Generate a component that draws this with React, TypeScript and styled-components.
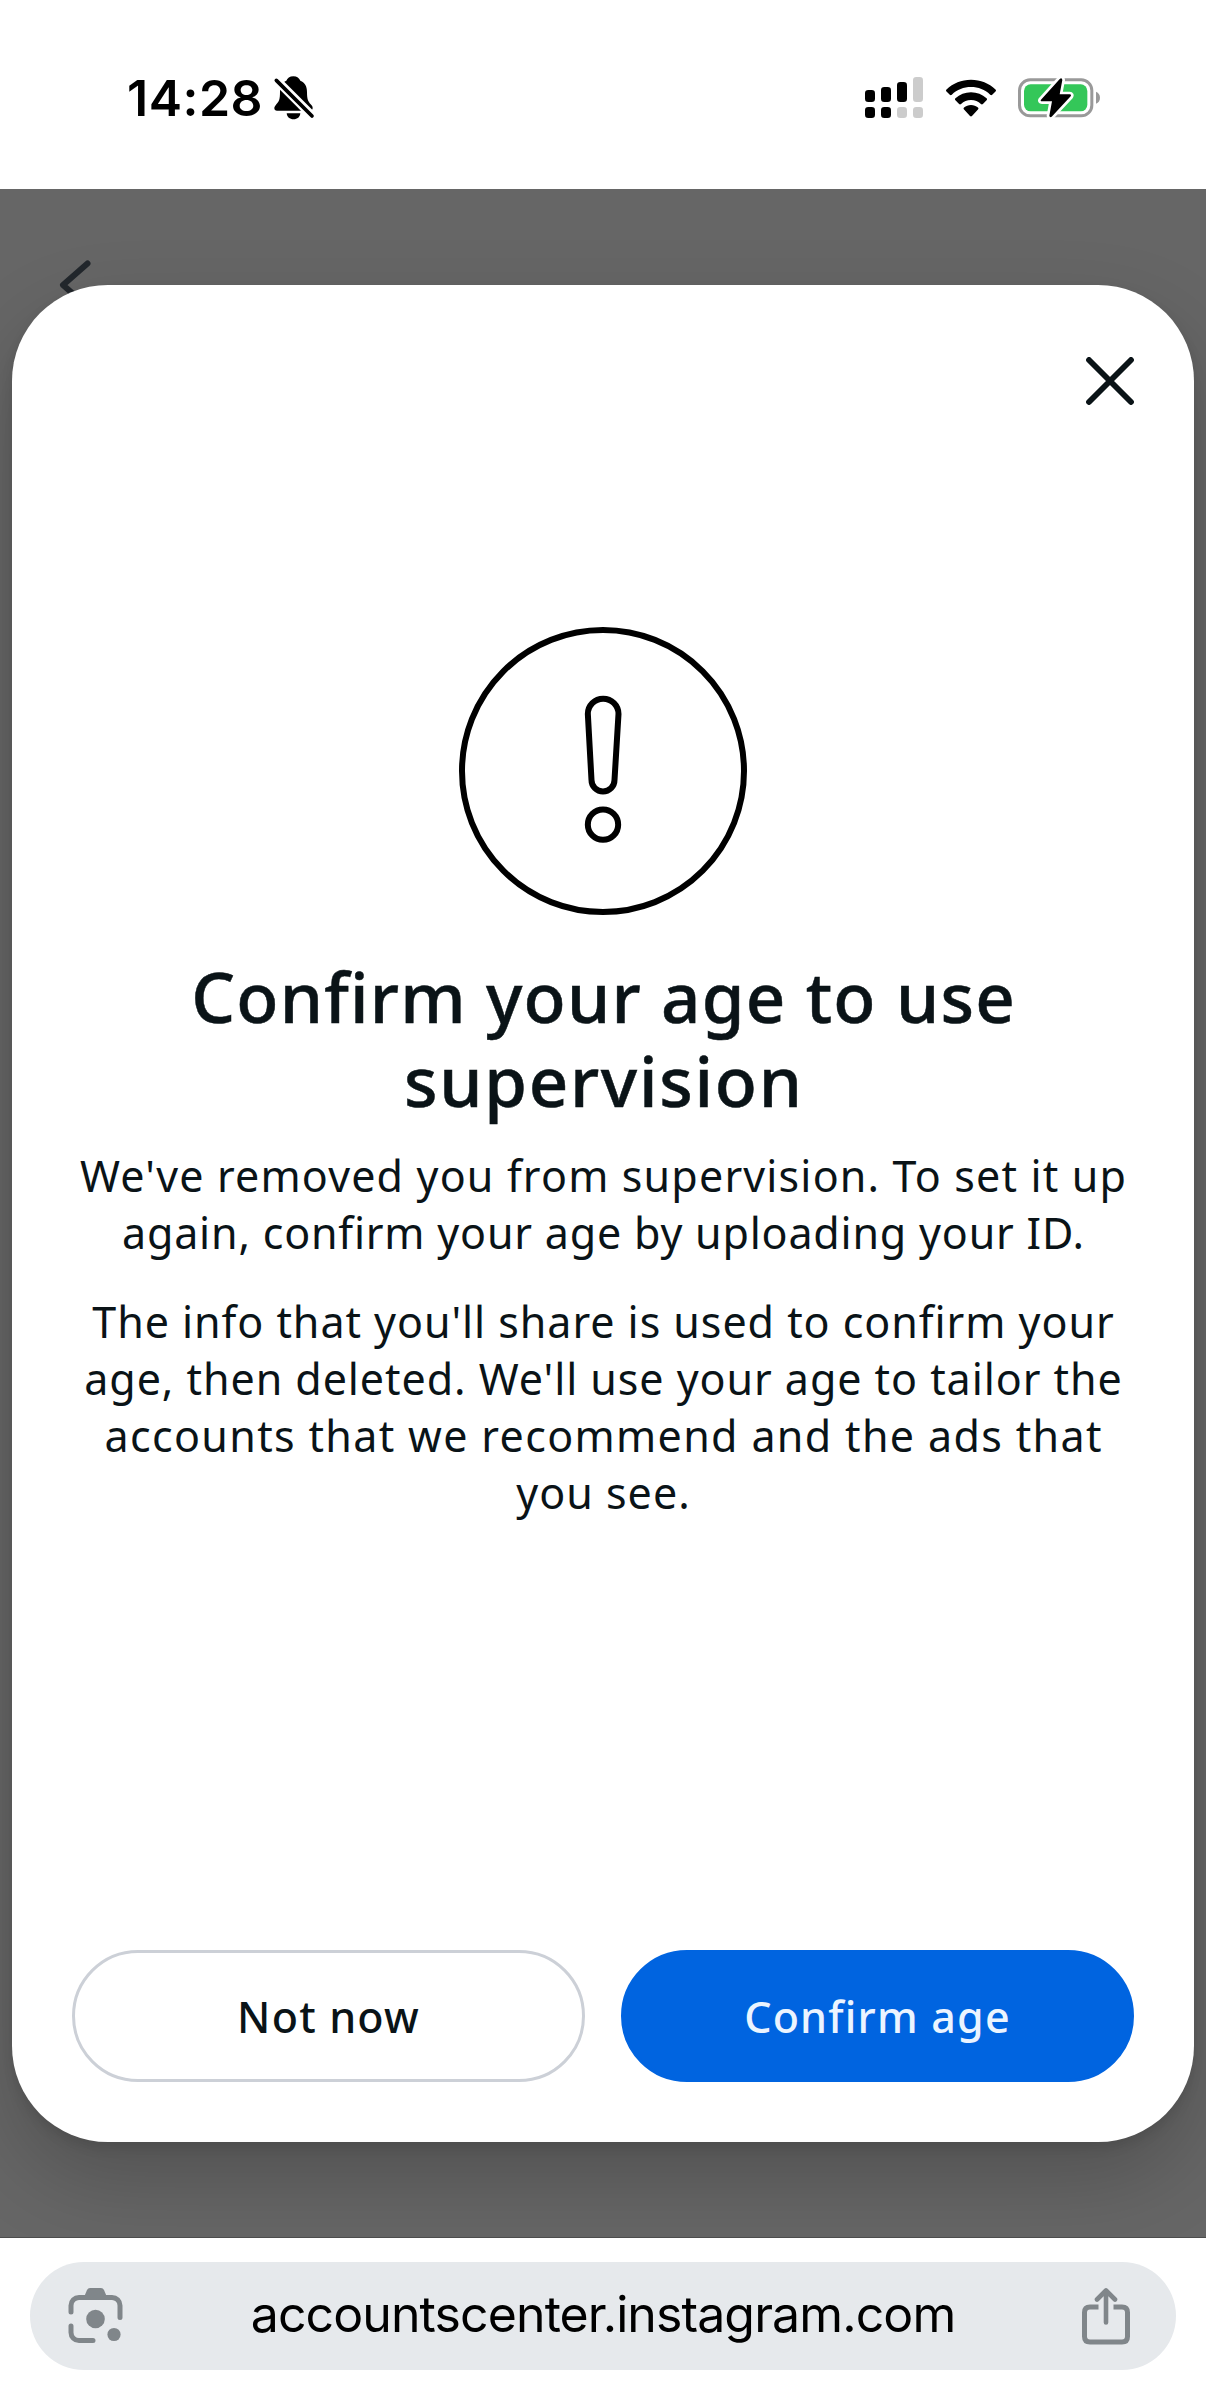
import React from 'react';
import styled, { createGlobalStyle } from 'styled-components';

const GlobalStyle = createGlobalStyle`
  *, *::before, *::after { box-sizing: border-box; }
  body { margin: 0; background: #fff; }
  svg { display: block; flex: none; }
  h1, p { margin: 0; }
`;

const sans = `'Noto Sans', 'Open Sans', sans-serif`;
const system = `Inter, 'Liberation Sans', sans-serif`;

const Screen = styled.div`
  display: flex;
  flex-direction: column;
  width: 1206px;
  height: 2395px;
  overflow: hidden;
  background: #fff;
`;

const StatusBar = styled.header`
  display: flex;
  align-items: center;
  justify-content: space-between;
  flex: none;
  height: 189px;
  padding: 6px 106px 0 127px;
`;

const StatusGroup = styled.div<{ $gap: number }>`
  display: flex;
  align-items: center;
  gap: ${({ $gap }) => $gap}px;
`;

const Time = styled.span`
  font: 600 50px/60px ${system};
  letter-spacing: 0.5px;
  color: #000;
`;

const Backdrop = styled.main`
  position: relative;
  flex: none;
  height: 2049px;
  padding: 96px 12px;
  overflow: hidden;
  background: #666;
  border-bottom: 1px solid #4c4c4c;
`;

const BackArrow = styled.svg`
  position: absolute;
  left: 56px;
  top: 66px;
`;

const Dialog = styled.section`
  position: relative;
  display: flex;
  flex-direction: column;
  height: 1857px;
  padding: 60px;
  border-radius: 96px;
  background: #fff;
  box-shadow: 0 36px 84px rgba(0, 0, 0, 0.2), 0 6px 12px rgba(0, 0, 0, 0.1);
`;

const CloseButton = styled.button`
  align-self: flex-end;
  display: flex;
  align-items: center;
  justify-content: center;
  width: 72px;
  height: 72px;
  margin-right: -12px;
  padding: 0;
  border: 0;
  background: none;
`;

const Content = styled.div`
  display: flex;
  flex-direction: column;
  align-items: center;
  flex: 1;
  padding-top: 210px;
  text-align: center;
  color: #0a1317;
`;

const Title = styled.h1`
  margin-top: 39px;
  font: 500 69px/84px ${sans};
  -webkit-text-stroke: 0.5px #0a1317;
`;

const Paragraph = styled.p<{ $top: number }>`
  margin-top: ${({ $top }) => $top}px;
  font: 400 43px/57px ${sans};
`;

const Line = styled.span<{ $tracking: number }>`
  display: block;
  white-space: nowrap;
  letter-spacing: ${({ $tracking }) => $tracking}px;
  margin-right: ${({ $tracking }) => -$tracking}px;
`;

const Actions = styled.footer`
  display: grid;
  grid-template-columns: 1fr 1fr;
  gap: 36px;
`;

const Action = styled.button<{ $primary?: boolean }>`
  height: 132px;
  padding: 0;
  border: 3px solid ${({ $primary }) => ($primary ? '#0064e0' : '#ccd0d7')};
  border-radius: 66px;
  background: ${({ $primary }) => ($primary ? '#0064e0' : '#fff')};
  color: ${({ $primary }) => ($primary ? '#ebf4ff' : '#0a1317')};
  font: 500 43px/57px ${sans};
  letter-spacing: 1.2px;
`;

const BrowserBar = styled.nav`
  flex: 1;
  padding: 24px 30px 0;
`;

const AddressPill = styled.div`
  display: flex;
  align-items: center;
  justify-content: space-between;
  height: 108px;
  padding: 0 46px 0 38px;
  border-radius: 54px;
  background: #e6e9ec;
`;

const Address = styled.span`
  padding-bottom: 4px;
  font: 400 50px/60px ${system};
  letter-spacing: -0.9px;
  color: #000;
`;

type Row = { text: string; tracking: number };

const title: Row[] = [
  { text: 'Confirm your age to use', tracking: 1.22 },
  { text: 'supervision', tracking: 1.7 },
];

const removed: Row[] = [
  { text: "We've removed you from supervision. To set it up", tracking: 1.17 },
  { text: 'again, confirm your age by uploading your ID.', tracking: 0.8 },
];

const usage: Row[] = [
  { text: "The info that you'll share is used to confirm your", tracking: 0.95 },
  { text: "age, then deleted. We'll use your age to tailor the", tracking: 0.94 },
  { text: 'accounts that we recommend and the ads that', tracking: 1.34 },
  { text: 'you see.', tracking: 1 },
];

const Lines = ({ rows }: { rows: Row[] }) => (
  <>
    {rows.map(({ text, tracking }) => (
      <Line key={text} $tracking={tracking}>{text}</Line>
    ))}
  </>
);

const BellSlot = styled.span`
  padding-bottom: 2px;
`;

const MutedBell = () => (
  <svg width="44" height="48" viewBox="487 40 132 144">
    <path d="M551 50c-11 0-18 6-21 13-13 6-19 18-19 34 0 22-3 29-11 37-4 5-6 8-6 12 0 5 3 7 8 7h98c6 0 9-3 9-8 0-4-2-7-6-11-8-9-11-16-11-37 0-17-6-28-20-34-3-7-10-13-21-13z" />
    <path d="M531 161h41c-1 11-9 18-20.500 18s-19.500-7-20.500-18z" />
    <path d="M492 53L618 179" stroke="#fff" strokeWidth="26" />
    <path d="M500 62L607 169" stroke="#000" strokeWidth="11" strokeLinecap="round" />
  </svg>
);

const bars = [
  { x: 0, y: 13, h: 12, lower: '#000', upper: '#000' },
  { x: 16, y: 10, h: 15, lower: '#000', upper: '#000' },
  { x: 32, y: 5, h: 20, lower: '#ccc', upper: '#000' },
  { x: 48, y: 0, h: 25, lower: '#ccc', upper: '#ccc' },
];

const Signal = () => (
  <svg width="58" height="41" viewBox="0 0 58 41">
    {bars.map(({ x, y, h, lower, upper }) => (
      <g key={x}>
        <rect x={x} y={y} width="10" height={h} rx="3.300" fill={upper} />
        <rect x={x} y="30" width="10" height="11" rx="3.300" fill={lower} />
      </g>
    ))}
  </svg>
);

const Wifi = () => (
  <svg width="50" height="38" viewBox="316 55 151 114">
    <path d="M391.500 57c29 0 54 11 74 29 2 2 2 4 0 6l-10 10c-2 2-4 2-6 0-16-15-36-23-58-23s-42 8-58 23c-2 2-4 2-6 0l-10-10c-2-2-2-4 0-6 20-18 45-29 74-29z" />
    <path d="M391.500 95c18 0 34 7 47 18 2 2 2 4 0 6l-11 11c-2 2-4 2-6 0-8-8-18-12-30-12s-22 4-30 12c-2 2-4 2-6 0l-11-11c-2-2-2-4 0-6 13-11 29-18 47-18z" />
    <path d="M391.500 133c8 0 15 3 21 8 2 2 2 4 0 6l-18 19c-2 2-4 2-6 0l-18-19c-2-2-2-4 0-6 6-5 13-8 21-8z" />
  </svg>
);

const Battery = () => (
  <svg width="82" height="42" viewBox="534 50 246 126">
    <rect x="538.500" y="58.500" width="217" height="108" rx="32" fill="none" stroke="#999" strokeWidth="9" />
    <path d="M768 94c8 3 12 10 12 18s-4 15-12 18z" fill="#999" />
    <rect x="552" y="72" width="190" height="81" rx="20" fill="#34c759" />
    <path
      d="M660 55L603 118Q600 123 606 123H636L628 166Q629 173 635 169L692 108Q695 102 689 102H659L667 59Q666 51 660 55Z"
      fill="#000"
      stroke="#fff"
      strokeWidth="16"
      strokeLinejoin="round"
      paintOrder="stroke"
    />
  </svg>
);

const CloseIcon = () => (
  <svg width="48" height="48" viewBox="0 0 48 48" stroke="#0a1317" strokeWidth="5.800" strokeLinecap="round">
    <path d="M3 3L45 45M45 3L3 45" />
  </svg>
);

const Alert = () => (
  <svg width="288" height="288" viewBox="57 51 864 864" fill="none" stroke="#000" strokeWidth="18">
    <circle cx="489" cy="483" r="423" />
    <path d="M443.500 312a46 46 0 0 1 92 0L523.500 510a34.500 34.500 0 0 1-69 0Z" />
    <circle cx="489" cy="644" r="45.500" />
  </svg>
);

const LensIcon = () => (
  <svg width="56" height="56" viewBox="0 0 56 56">
    <g fill="none" stroke="#80868a" strokeWidth="5" strokeLinecap="round">
      <path d="M3 24V17.500A8 8 0 0 1 11 9.500H44A8 8 0 0 1 52 17.500V29.500" />
      <path d="M3 38V44.500A8 8 0 0 0 11 52.500H25" />
    </g>
    <g fill="#80868a">
      <path d="M16.500 8L19 2Q20 0 22 0H33Q35 0 36 2L38.500 8V10H16.500Z" />
      <circle cx="27.500" cy="31" r="9.300" />
      <circle cx="46" cy="46.500" r="6.600" />
    </g>
  </svg>
);

const ShareIcon = () => (
  <svg width="48" height="57" viewBox="0 0 48 57" fill="none" stroke="#80868a" strokeLinecap="round">
    <path d="M16.500 19H8Q2.500 19 2.500 24.500V48.500Q2.500 54 8 54H40Q45.500 54 45.500 48.500V24.500Q45.500 19 40 19H31.500" strokeWidth="5" strokeLinecap="butt" />
    <path d="M24 34.500V3M15 11.500L24 2.500L33 11.500" strokeWidth="4.600" strokeLinejoin="round" />
  </svg>
);

export default function App() {
  return (
    <Screen>
      <GlobalStyle />
      <StatusBar>
        <StatusGroup $gap={9}>
          <Time>14:28</Time>
          <BellSlot><MutedBell /></BellSlot>
        </StatusGroup>
        <StatusGroup $gap={22.5}>
          <Signal />
          <Wifi />
          <Battery />
        </StatusGroup>
      </StatusBar>
      <Backdrop>
        <BackArrow width="48" height="60" viewBox="0 0 48 60" fill="none" stroke="#22272c" strokeWidth="6" strokeLinecap="round" strokeLinejoin="round">
          <path d="M31.500 8.500L7 30L31.500 51.500" />
        </BackArrow>
        <Dialog role="dialog">
          <CloseButton aria-label="Close"><CloseIcon /></CloseButton>
          <Content>
            <Alert />
            <Title><Lines rows={title} /></Title>
            <Paragraph $top={25}><Lines rows={removed} /></Paragraph>
            <Paragraph $top={32}><Lines rows={usage} /></Paragraph>
          </Content>
          <Actions>
            <Action>Not now</Action>
            <Action $primary>Confirm age</Action>
          </Actions>
        </Dialog>
      </Backdrop>
      <BrowserBar>
        <AddressPill>
          <LensIcon />
          <Address>accountscenter.instagram.com</Address>
          <ShareIcon />
        </AddressPill>
      </BrowserBar>
    </Screen>
  );
}
